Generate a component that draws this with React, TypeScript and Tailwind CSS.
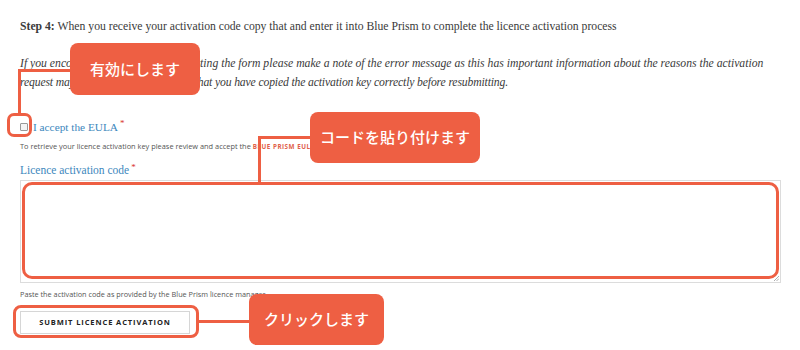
import React from "react";

const ORANGE = "bg-[#ee5f43]";

export default function App() {
  return (
    <div className="relative w-[800px] h-[350px] bg-white overflow-hidden" style={{ fontFamily: "'Liberation Serif', serif" }}>
      <div className="px-[20px] pt-[19px]">
        <p className="text-[11.7px] leading-[16px] text-[#3a3a3a] font-['Liberation_Serif',serif]">
          <b>Step 4:</b> When you receive your activation code copy that and enter it into Blue Prism to complete the licence activation process
        </p>
        <p className="mt-[19px] italic text-[11.7px] leading-[19px] text-[#3a3a3a] font-['Liberation_Serif',serif]">
          If you encounter an error when submitting the form please make a note of the error message as this has important information about the reasons the activation
          <br />
          <span className="tracking-[-0.15px]">request may have failed. Please check that you have copied the activation key correctly before resubmitting.</span>
        </p>
        <div className="mt-[27px] flex items-center h-[16px]">
          <span className="w-[8px] h-[8px] border border-[#999] rounded-[1px] bg-[#f4f4f4]" />
          <span className="ml-[5px] text-[11.3px] text-[#3d87bd] font-['Liberation_Serif',serif]">I accept the EULA</span>
          <span className="ml-[2px] -mt-[6px] text-[9px] text-[#d9342b]">*</span>
        </div>
        <p className="mt-[6px] text-[7.4px] leading-[10px] text-[#555] font-['Open_Sans',sans-serif]">
          To retrieve your licence activation key please review and accept the{" "}
          <span className="text-[#e0604a] font-bold tracking-[0.5px] text-[6.3px]">BLUE PRISM EULA</span>
        </p>
        <div className="mt-[11px] flex items-center h-[16px]">
          <span className="text-[11.5px] text-[#3d87bd] font-['Liberation_Serif',serif]">Licence activation code</span>
          <span className="ml-[2px] -mt-[6px] text-[9px] text-[#d9342b]">*</span>
        </div>
        <div className="mt-[1px] h-[103px] w-[761px] border border-[#dcdcdc] bg-white relative">
          <svg className="absolute right-[1px] bottom-[1px]" width="6" height="6" viewBox="0 0 6 6">
            <path d="M1 6 L6 1 M3.5 6 L6 3.5" stroke="#999" strokeWidth="0.8" />
          </svg>
        </div>
        <p className="mt-[6px] text-[7.3px] leading-[10px] text-[#555] font-['Open_Sans',sans-serif]">
          Paste the activation code as provided by the Blue Prism licence manager.
        </p>
        <div className="mt-[12px] w-[170px] h-[23px] border border-[#d6d6d6] bg-white flex items-center justify-center">
          <span className="text-[7.5px] font-bold tracking-[0.9px] text-[#222] font-['Open_Sans',sans-serif]">SUBMIT LICENCE ACTIVATION</span>
        </div>
      </div>

      {/* Annotation 1 */}
      <div className="absolute left-[18px] top-[69px] w-[52px] h-[3px] bg-[#ee5f43]" />
      <div className="absolute left-[18px] top-[69px] w-[3px] h-[45px] bg-[#ee5f43]" />
      <div className="absolute left-[7px] top-[113px] w-[25px] h-[24px] border-[3px] border-[#ee5f43] rounded-[7px]" />
      <div className={`absolute left-[70px] top-[43px] w-[130px] h-[52px] ${ORANGE} rounded-[8px] flex items-center justify-center`}>
        <span className="text-white text-[15px] font-medium font-['Noto_Sans_CJK_JP',sans-serif]">有効にします</span>
      </div>

      {/* Annotation 2 */}
      <div className="absolute left-[258px] top-[136px] w-[52px] h-[3px] bg-[#ee5f43]" />
      <div className="absolute left-[258px] top-[136px] w-[3px] h-[47px] bg-[#ee5f43]" />
      <div className="absolute left-[22px] top-[182px] w-[757px] h-[97px] border-[3px] border-[#ee5f43] rounded-[10px]" />
      <div className={`absolute left-[310px] top-[112px] w-[170px] h-[51px] ${ORANGE} rounded-[8px] flex items-center justify-center`}>
        <span className="text-white text-[15px] font-medium font-['Noto_Sans_CJK_JP',sans-serif]">コードを貼り付けます</span>
      </div>

      {/* Annotation 3 */}
      <div className="absolute left-[13px] top-[305px] w-[186px] h-[33px] border-[3px] border-[#ee5f43] rounded-[8px]" />
      <div className="absolute left-[199px] top-[320px] w-[50px] h-[3px] bg-[#ee5f43]" />
      <div className={`absolute left-[249px] top-[294px] w-[135px] h-[51px] ${ORANGE} rounded-[8px] flex items-center justify-center`}>
        <span className="text-white text-[15px] font-medium font-['Noto_Sans_CJK_JP',sans-serif]">クリックします</span>
      </div>
    </div>
  );
}
